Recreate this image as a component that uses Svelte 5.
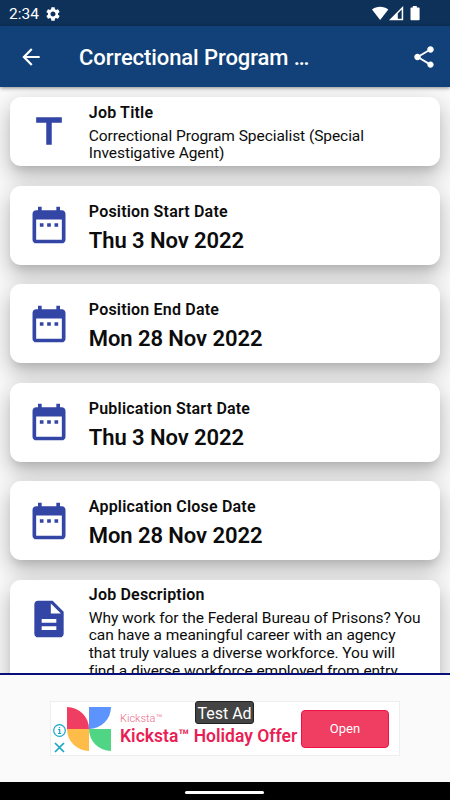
<script>
    const title = 'Correctional Program …';

    const dates = [
        { label: 'Position Start Date', value: 'Thu 3 Nov 2022' },
        { label: 'Position End Date', value: 'Mon 28 Nov 2022' },
        { label: 'Publication Start Date', value: 'Thu 3 Nov 2022' },
        { label: 'Application Close Date', value: 'Mon 28 Nov 2022' }
    ];
</script>

<div class="screen">
    <div class="status-bar">
        <span class="clock">2:34</span>
        <svg class="gear" viewBox="2 2 20 20" fill="#fff">
            <path d="M19.14 12.94c.04-.3.06-.61.06-.94 0-.32-.02-.64-.07-.94l2.03-1.58c.18-.14.23-.41.12-.61l-1.92-3.32c-.12-.22-.37-.29-.59-.22l-2.39.96c-.5-.38-1.03-.7-1.62-.94l-.36-2.54c-.04-.24-.24-.41-.48-.41h-3.84c-.24 0-.43.17-.47.41l-.36 2.54c-.59.24-1.13.57-1.62.94l-2.39-.96c-.22-.08-.47 0-.59.22L2.74 8.87c-.12.21-.08.47.12.61l2.03 1.58c-.05.3-.09.63-.09.94s.02.64.07.94l-2.03 1.58c-.18.14-.23.41-.12.61l1.92 3.32c.12.22.37.29.59.22l2.39-.96c.5.38 1.03.7 1.62.94l.36 2.54c.05.24.24.41.48.41h3.84c.24 0 .44-.17.47-.41l.36-2.54c.59-.24 1.13-.56 1.62-.94l2.39.96c.22.08.47 0 .59-.22l1.92-3.32c.12-.22.07-.47-.12-.61l-2.01-1.58zM12 15.6c-1.98 0-3.6-1.62-3.6-3.6s1.62-3.6 3.6-3.6 3.6 1.62 3.6 3.6-1.62 3.6-3.6 3.6z" />
        </svg>
        <svg class="signals" viewBox="0 0 50 16" fill="#fff">
            <path d="M0 3.5C4.6-.2 11.7-.2 16.3 3.5L8.15 14z" />
            <path fill-rule="evenodd" d="M17 14.2L31.2 0v14.2zM25.8 12.8h3.9V3.6l-3.9 3.9z" />
            <path d="M40.8 1.4V0h4v1.4h1.8c.6 0 1 .4 1 1v10.8c0 .6-.4 1-1 1H39.5c-.6 0-1-.4-1-1V2.4c0-.6.4-1 1-1z" />
        </svg>
    </div>

    <header class="app-bar">
        <button class="icon-button" aria-label="Back">
            <svg width="26" height="26" viewBox="0 0 24 24" fill="#fff">
                <path d="M20 11H7.83l5.59-5.59L12 4l-8 8 8 8 1.41-1.41L7.83 13H20v-2z" />
            </svg>
        </button>
        <h1 class="title">{title}</h1>
        <button class="icon-button share" aria-label="Share">
            <svg width="26" height="26" viewBox="0 0 24 24" fill="#fff">
                <path d="M18 16.08c-.76 0-1.44.3-1.96.77L8.91 12.7c.05-.23.09-.46.09-.7s-.04-.47-.09-.7l7.05-4.11c.54.5 1.25.81 2.04.81 1.66 0 3-1.34 3-3s-1.34-3-3-3-3 1.34-3 3c0 .24.04.47.09.7L8.04 9.81C7.5 9.31 6.79 9 6 9c-1.66 0-3 1.34-3 3s1.34 3 3 3c.79 0 1.5-.31 2.04-.81l7.12 4.16c-.05.21-.08.43-.08.65 0 1.61 1.31 2.92 2.92 2.92s2.92-1.31 2.92-2.92-1.31-2.92-2.92-2.92z" />
            </svg>
        </button>
    </header>

    <main class="list">
        <section class="card job-title">
            <svg class="card-icon" viewBox="0 0 24 24">
                <path d="M5 4v3h5.5v12h3V7H19V4z" />
            </svg>
            <div class="content">
                <h2>Job Title</h2>
                <p>Correctional Program Specialist (Special<br />Investigative Agent)</p>
            </div>
        </section>

        {#each dates as date}
            <section class="card date">
                <svg class="card-icon" viewBox="0 0 24 24">
                    <path d="M9 11H7v2h2v-2zm4 0h-2v2h2v-2zm4 0h-2v2h2v-2zm2-7h-1V2h-2v2H8V2H6v2H5c-1.11 0-1.99.9-1.99 2L3 20c0 1.1.89 2 2 2h14c1.1 0 2-.9 2-2V6c0-1.1-.9-2-2-2zm0 16H5V9h14v11z" />
                </svg>
                <div class="content">
                    <h2>{date.label}</h2>
                    <div class="value">{date.value}</div>
                </div>
            </section>
        {/each}

        <section class="card description">
            <svg class="card-icon" viewBox="0 0 24 24">
                <path d="M14 2H6c-1.1 0-1.99.9-1.99 2L4 20c0 1.1.89 2 1.99 2H18c1.1 0 2-.9 2-2V8l-6-6zm2 16H8v-2h8v2zm0-4H8v-2h8v2zm-3-5V3.5L18.5 9H13z" />
            </svg>
            <div class="content">
                <h2>Job Description</h2>
                <p>
                    Why work for the Federal Bureau of Prisons? You<br />
                    can have a meaningful career with an agency<br />
                    that truly values a diverse workforce. You will<br />
                    find a diverse workforce employed from entry
                </p>
            </div>
        </section>
    </main>

    <footer class="ad-area">
        <div class="ad">
            <div class="ad-choices">
                <svg width="13" height="13" viewBox="0 0 13 13" fill="none" stroke="#18a5c8" stroke-width="1.2">
                    <circle cx="6.5" cy="6.5" r="5.8" />
                    <path d="M5.2 5.7h1.5v3.7M5 9.5h3.3M6.5 3v1.3" />
                </svg>
                <svg width="11" height="11" viewBox="0 0 11 11" fill="none" stroke="#18a5c8" stroke-width="1.7">
                    <path d="M1 1l9 9M10 1l-9 9" />
                </svg>
            </div>
            <svg class="logo" viewBox="0 0 44 44">
                <path fill="#ef3e62" d="M0 0a22 22 0 0 1 22 22H0z" />
                <path fill="#5c93fc" d="M22 0h22a22 22 0 0 1-22 22z" />
                <path fill="#ffbc48" d="M0 22h22v22A22 22 0 0 1 0 22z" />
                <path fill="#4fd583" d="M22 22h22v22A22 22 0 0 1 22 22z" />
            </svg>
            <div class="ad-text">
                <span class="brand">Kicksta™</span>
                <strong>Kicksta™ Holiday Offer</strong>
            </div>
            <button class="open">Open</button>
            <span class="test-label">Test Ad</span>
        </div>
    </footer>

    <div class="nav-bar"><span class="handle"></span></div>
</div>

<style>
    :global(body) {
        margin: 0;
    }

    .screen {
        display: flex;
        flex-direction: column;
        width: 450px;
        height: 800px;
        overflow: hidden;
        background: #fafafa;
        color: #0c0c0c;
        font-family: Roboto, sans-serif;
    }

    h1,
    h2,
    p {
        margin: 0;
    }

    button {
        border: none;
        padding: 0;
        font-family: inherit;
    }

    .status-bar {
        flex: 0 0 26px;
        display: flex;
        align-items: center;
        box-sizing: border-box;
        padding: 1px 28px 0 9px;
        background: #0d3159;
        color: #fff;
    }

    .clock {
        width: 37px;
        font-size: 15.5px;
    }

    .gear {
        width: 14px;
        height: 14px;
    }

    .signals {
        width: 50px;
        height: 16px;
        margin: 1px 0 0 auto;
    }

    .app-bar {
        position: relative;
        z-index: 1;
        flex: 0 0 61px;
        display: flex;
        align-items: center;
        box-sizing: border-box;
        padding: 0 13px 0 18px;
        background: #114178;
        box-shadow: 0 1px 4px rgba(0, 0, 0, 0.45);
    }

    .icon-button {
        display: flex;
        background: none;
    }

    .title {
        width: 236px;
        margin-left: 35px;
        padding-top: 2px;
        color: #fff;
        font-size: 22px;
        font-weight: 500;
        letter-spacing: -0.08px;
        line-height: 28px;
        white-space: nowrap;
    }

    .share {
        margin-left: auto;
    }

    .list {
        flex: 0 0 586px;
        display: flex;
        flex-direction: column;
        gap: 19.6px;
        box-sizing: border-box;
        padding: 10px 10px 0;
        overflow: hidden;
    }

    .card {
        flex-shrink: 0;
        display: flex;
        align-items: center;
        box-sizing: border-box;
        height: 78.9px;
        padding-left: 17.3px;
        border-radius: 11px;
        background: #fff;
        box-shadow: 0 7px 9px -4px rgba(0, 0, 0, 0.12), 0 9px 22px 2px rgba(0, 0, 0, 0.24);
    }

    .card-icon {
        flex: none;
        width: 44px;
        height: 44px;
        margin-right: 17.5px;
        fill: #3446a5;
    }

    h2 {
        font-size: 16px;
        font-weight: 600;
        letter-spacing: 0.19px;
        line-height: 19px;
    }

    p {
        font-size: 15.5px;
        letter-spacing: -0.06px;
        line-height: 17.6px;
        white-space: nowrap;
    }

    .job-title {
        height: 69.3px;
    }

    .job-title p,
    .description p {
        margin-top: 6px;
    }

    .job-title .content {
        padding-top: 2px;
    }

    .date .content {
        padding-top: 5px;
    }

    .value {
        margin-top: 7px;
        font-size: 22px;
        font-weight: 600;
        letter-spacing: -0.07px;
        line-height: 26px;
    }

    .description {
        align-items: flex-start;
        height: 140px;
        padding-top: 5px;
    }

    .description .card-icon {
        margin-top: 12.5px;
    }

    .ad-area {
        flex: 0 0 109px;
        display: flex;
        justify-content: center;
        align-items: center;
        box-sizing: border-box;
        border-top: 2px solid #07107a;
        background: #fafafa;
    }

    .ad {
        position: relative;
        display: flex;
        align-items: center;
        box-sizing: border-box;
        width: 350px;
        height: 55px;
        border: 1px solid #eee;
        background: #fff;
    }

    .ad-choices {
        display: flex;
        flex-direction: column;
        align-items: center;
        gap: 5px;
        width: 16px;
        padding-top: 19px;
    }

    .logo {
        width: 44px;
        height: 44px;
    }

    .ad-text {
        display: flex;
        flex-direction: column;
        width: 181px;
        margin-left: 9px;
        padding-top: 1px;
        color: #e91e55;
        white-space: nowrap;
    }

    .brand {
        color: #ef6a8a;
        font-size: 11px;
        font-weight: 300;
        line-height: 14px;
    }

    strong {
        font-size: 17.5px;
        font-weight: 600;
        line-height: 21px;
    }

    .open {
        width: 88px;
        height: 38px;
        border: 1px solid #ee1144;
        border-radius: 4px;
        background: #ef3e62;
        color: #fff;
        font-size: 13px;
    }

    .test-label {
        position: absolute;
        top: -1px;
        left: 144px;
        box-sizing: border-box;
        width: 59px;
        height: 23px;
        border: 1px solid #222;
        border-radius: 3px;
        background: #444;
        color: #fff;
        font-size: 16px;
        line-height: 23px;
        text-align: center;
    }

    .nav-bar {
        flex: 0 0 18px;
        display: flex;
        justify-content: center;
        align-items: center;
        background: #000;
    }

    .handle {
        width: 79px;
        height: 3px;
        margin: 2px 1px 0 0;
        border-radius: 2px;
        background: #fff;
    }
</style>
